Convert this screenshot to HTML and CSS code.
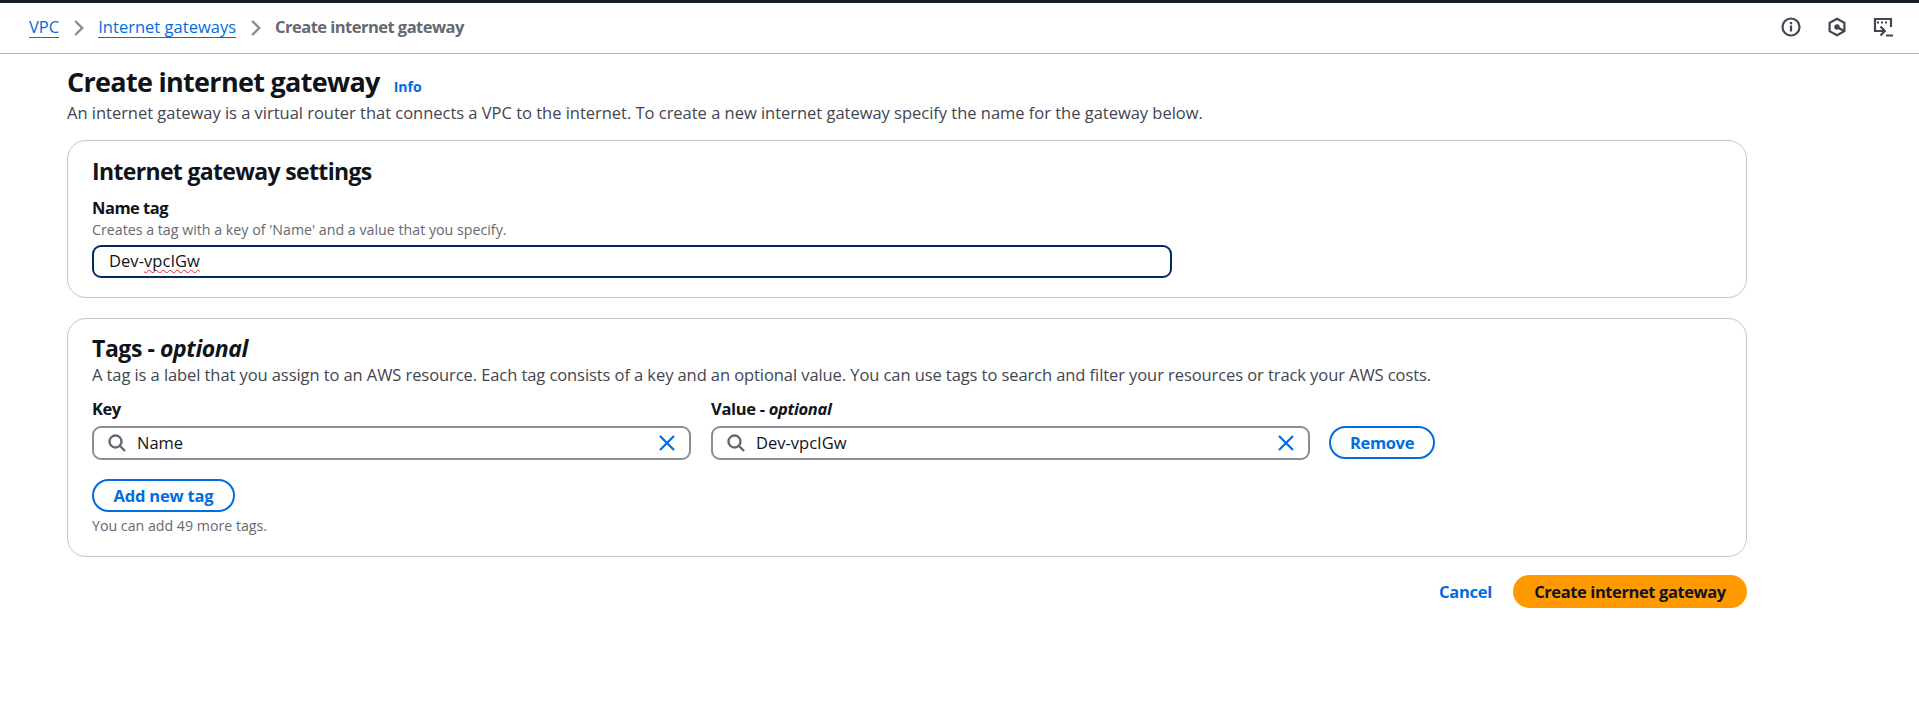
FILE: index.html
```html
<!DOCTYPE html>
<html lang="en">
<head>
<meta charset="utf-8">
<title>Create internet gateway</title>
<link rel="stylesheet" href="styles.css">
</head>
<body>
<header class="topbar">
  <nav class="crumbs">
    <a class="crumb" href="#">VPC</a>
    <svg class="chevron" width="10" height="16" viewBox="0 0 10 16"><path d="M1.200 1l7 7-7 7"/></svg>
    <a class="crumb" href="#">Internet gateways</a>
    <svg class="chevron" width="10" height="16" viewBox="0 0 10 16"><path d="M1.200 1l7 7-7 7"/></svg>
    <span class="crumb-current">Create internet gateway</span>
  </nav>
  <div class="tools">
    <svg class="tool" width="20" height="20" viewBox="0 0 20 20"><circle cx="10" cy="10" r="8.5"/><path d="M10 8.500v6M10 5v2.200"/></svg>
    <svg class="tool" width="20" height="20" viewBox="0 0 20 20"><path d="M10 1.800l7.400 4.100v8.200L10 18.200l-7.400-4.100V5.900z"/><path d="M10 10l7 4"/><circle class="solid" cx="10" cy="10" r="2.700"/></svg>
    <svg class="tool" width="20" height="20" viewBox="0 0 20 20"><path d="M8 14H2V2h16v8"/><path d="M4 5.500h2M8 5.500h2M12 5.500h2"/><path d="M5 14h6M7.500 9.500l4.300 4.500-4.300 4.500M13 18.500h7"/></svg>
  </div>
</header>
<main class="page">
  <div class="title-row"><h1>Create internet gateway</h1><a class="info" href="#">Info</a></div>
  <p class="lead">An internet gateway is a virtual router that connects a VPC to the internet. To create a new internet gateway specify the name for the gateway below.</p>

  <section class="panel">
    <h2>Internet gateway settings</h2>
    <div class="label first">Name tag</div>
    <div class="hint">Creates a tag with a key of 'Name' and a value that you specify.</div>
    <div class="field focused"><span>Dev-<span class="misspelled">vpcIGw</span></span></div>
  </section>

  <section class="panel">
    <h2 class="tags-title">Tags - <em>optional</em></h2>
    <p class="lead tags-lead">A tag is a label that you assign to an AWS resource. Each tag consists of a key and an optional value. You can use tags to search and filter your resources or track your AWS costs.</p>
    <div class="tag-row">
      <div class="tag-col">
        <div class="label">Key</div>
        <div class="field search">
          <svg class="magnifier" width="20" height="20" viewBox="0 0 20 20"><circle cx="8.500" cy="8.500" r="6"/><path d="M13 13l5 5"/></svg>
          <span class="value">Name</span>
          <svg class="clear" width="16" height="16" viewBox="0 0 16 16"><path d="M1 1l14 14M15 1L1 15"/></svg>
        </div>
      </div>
      <div class="tag-col">
        <div class="label value-label">Value - <em>optional</em></div>
        <div class="field search">
          <svg class="magnifier" width="20" height="20" viewBox="0 0 20 20"><circle cx="8.500" cy="8.500" r="6"/><path d="M13 13l5 5"/></svg>
          <span class="value">Dev-vpcIGw</span>
          <svg class="clear" width="16" height="16" viewBox="0 0 16 16"><path d="M1 1l14 14M15 1L1 15"/></svg>
        </div>
      </div>
      <button class="btn remove">Remove</button>
    </div>
    <button class="btn add">Add new tag</button>
    <div class="hint remaining">You can add 49 more tags.</div>
  </section>

  <div class="actions">
    <a class="cancel" href="#">Cancel</a>
    <button class="btn primary">Create internet gateway</button>
  </div>
</main>
</body>
</html>
```
FILE: styles.css
```css
* { box-sizing: border-box; }
body {
  margin: 0;
  background: #fff;
  color: #0f141a;
  font: 400 16.5px/24px "Open Sans", "Noto Sans", sans-serif;
}
h1, h2, p { margin: 0; }
a { color: #006ce0; text-decoration: none; }
svg { display: block; flex: none; fill: none; }

.topbar {
  display: flex;
  align-items: center;
  justify-content: space-between;
  height: 54px;
  padding: 0 26px 1px 29px;
  border-top: 3px solid #161d26;
  border-bottom: 1px solid #b4b4bb;
}
.crumbs { display: flex; align-items: center; }
.crumb {
  line-height: 20px;
  border-bottom: 1px solid #006ce0;
  letter-spacing: 0.02px;
}
.chevron { margin: 0 14px 0 15px; stroke: #8c8c94; stroke-width: 2.4; }
.crumb-current {
  padding-bottom: 1px;
  color: #656871;
  font-weight: 700;
  line-height: 20px;
  letter-spacing: -0.53px;
}
.tools { display: flex; gap: 26px; padding-bottom: 1px; }
.tool { stroke: #424650; stroke-width: 2.2; }
.solid { fill: #424650; stroke: none; }

.page { width: 1747px; padding: 10px 0 0 67px; }
.title-row { display: flex; align-items: baseline; gap: 14px; }
h1 { font-size: 27px; font-weight: 700; line-height: 36px; letter-spacing: -0.7px; }
.info { font-size: 14px; font-weight: 700; }
.lead { margin-top: 1px; color: #424650; letter-spacing: -0.02px; white-space: nowrap; }
.tags-lead { margin-top: 0; letter-spacing: -0.08px; }

.panel {
  margin-top: 15px;
  padding: 15px 24px 19px;
  border: 1px solid #c6c6cd;
  border-radius: 19px;
}
.panel + .panel { margin-top: 20px; padding: 14px 24px 21px; }
h2 { font-size: 23px; font-weight: 700; line-height: 30px; letter-spacing: -0.66px; }
.tags-title { letter-spacing: -0.42px; }
.label { font-weight: 700; letter-spacing: -0.5px; }
.value-label { letter-spacing: -0.32px; }
.label.first { margin-top: 10px; }
.hint { color: #656871; font-size: 14.2px; line-height: 18px; }
.label.first + .hint { margin-top: 1px; letter-spacing: 0.015px; }

.field {
  display: flex;
  align-items: center;
  height: 34px;
  border: 2px solid #8c8c94;
  border-radius: 9px;
  color: #0f141a;
}
.focused {
  width: 1080px;
  height: 33px;
  margin-top: 6px;
  padding: 0 0 2px 15px;
  border-color: #002b66;
  letter-spacing: 0.05px;
}
.misspelled {
  text-decoration: underline wavy #f0252f 1px;
  text-underline-offset: 2px;
  text-decoration-skip-ink: none;
}

.tag-row { display: flex; gap: 20px; margin-top: 10px; }
.tag-col { width: 599px; }
.search { margin-top: 5px; padding: 0 14px 0 13px; }
.magnifier { stroke: #656871; stroke-width: 2.4; }
.value { flex: 1; margin-left: 10px; }
.clear { stroke: #006ce0; stroke-width: 2.2; }

.btn {
  display: block;
  height: 33px;
  padding: 0;
  border: 2px solid #006ce0;
  border-radius: 17px;
  background: #fff;
  color: #006ce0;
  font: 700 16.5px/28px "Open Sans", "Noto Sans", sans-serif;
  letter-spacing: -0.35px;
}
.remove { width: 106px; margin: 29px 0 0 -1px; }
.add { width: 143px; margin-top: 19px; letter-spacing: -0.2px; }
.remaining { margin-top: 5px; }
.actions { display: flex; justify-content: flex-end; align-items: center; gap: 21px; margin-top: 18px; }
.cancel { font-weight: 700; letter-spacing: -0.25px; }
.primary { width: 234px; border-color: #ff9900; background: #ff9900; color: #0f141a; letter-spacing: -0.4px; }
```
